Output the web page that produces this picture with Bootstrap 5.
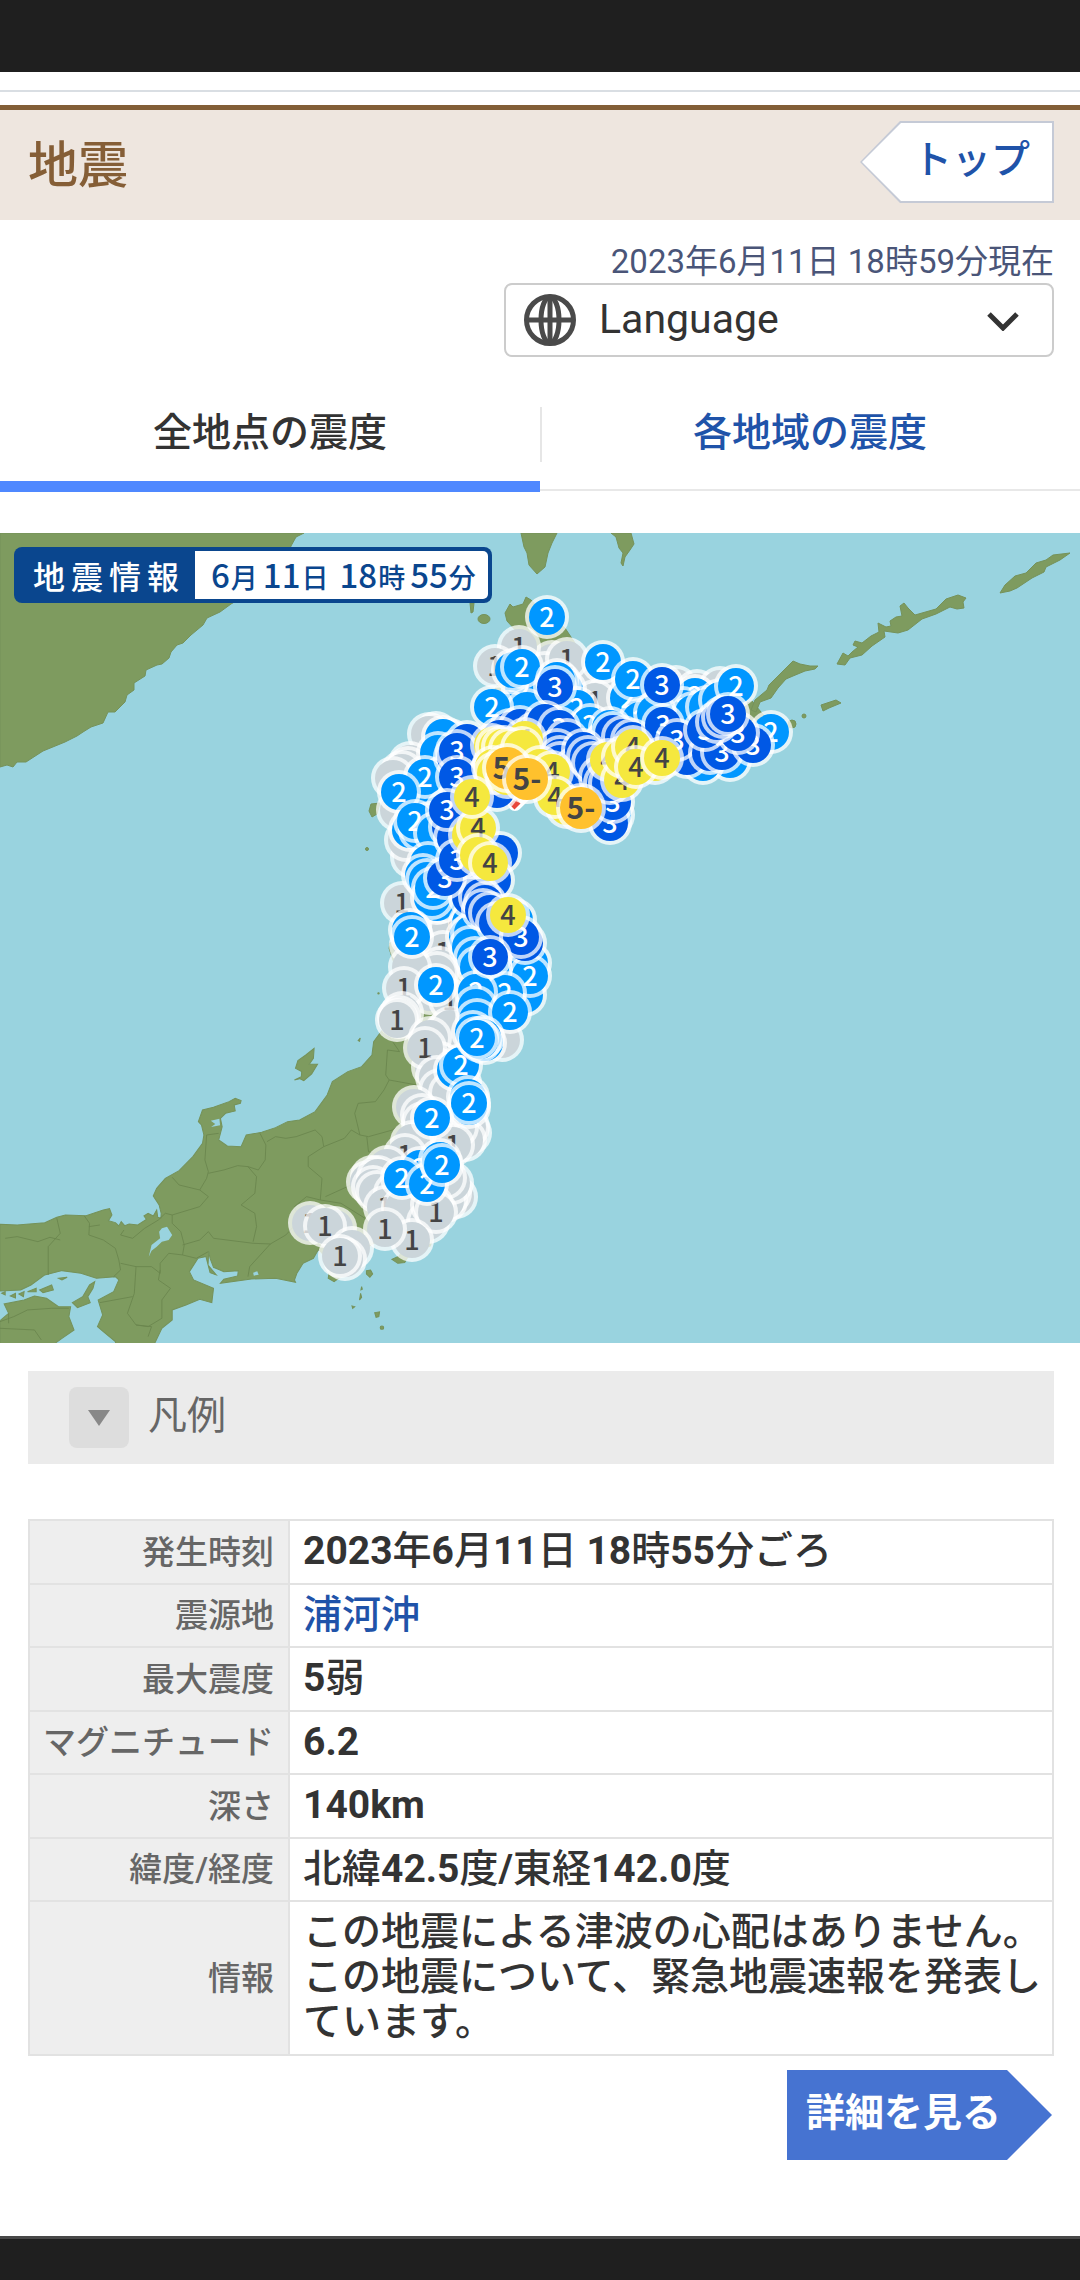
<!DOCTYPE html>
<html lang="ja">
<head>
<meta charset="utf-8">
<meta name="viewport" content="width=device-width, initial-scale=1">
<title>地震情報</title>
<link href="https://cdn.jsdelivr.net/npm/bootstrap@5.3.0/dist/css/bootstrap.min.css" rel="stylesheet">
<style>
  body { font-family: Roboto, "Noto Sans CJK JP", sans-serif; color: #333; background: #fff; font-size: 39px; line-height: 45px; }
  a { color: #1f53a9; text-decoration: none; }
  .gutter { padding-left: 28px; padding-right: 26px; }
  .status-strip { height: 72px; background: #1f1f1f; }
  .top-rule { height: 20px; border-bottom: 2px solid #d9dee3; margin-bottom: 13px; }
  .page-head { background: #eee6df; border-top: 5px solid #825e37; height: 115px; }
  .page-head h1 { font-size: 50px; line-height: 60px; font-weight: 500; color: #855e36; padding-top: 26px; }
  .back-link { position: relative; width: 194px; height: 82px; padding: 17px 24px 0 0; background: #c5cad6; clip-path: polygon(0 50%, 40px 0, 100% 0, 100% 100%, 40px 100%); font-weight: 500; text-align: right; margin-top: 11px; }
  .back-link::before { content: ""; position: absolute; inset: 2px; background: #fff; clip-path: polygon(0 50%, 39px 0, 100% 0, 100% 100%, 39px 100%); }
  .back-link span { position: relative; }
  .stamp { font-size: 33px; line-height: 43px; color: #4a5578; padding-top: 20px; }
  .lang-box { width: 550px; max-width: 100%; height: 74px; border: 2px solid #ccc; border-radius: 8px; padding: 0 33px 0 17px; }
  .lang-box select { border: 0; background: none; appearance: none; font-size: 41px; line-height: 50px; color: #333; padding: 0 0 2px 22px; }
  .tab-row { margin-top: 37px; }
  .tab-row a { height: 98px; padding-top: 17px; font-weight: 500; text-align: center; border-bottom: 11px solid #4f88ff; color: #333; }
  .tab-row a + a { position: relative; color: #1f53a9; border-bottom: 2px solid #e8e8e8; height: 97px; }
  .tab-row a + a::before { content: ""; position: absolute; left: 0; top: 13px; height: 55px; border-left: 2px solid #e6e6e6; }
  .quake-map { margin-top: 41px; background: #99d3df; }
  .map-title { position: absolute; left: 14px; top: 14px; height: 56px; background: #0a468e; border-radius: 8px; padding: 4px; color: #fff; font-family: "Noto Sans CJK JP", sans-serif; font-weight: 500; }
  .map-title b { font-size: 32px; font-weight: 500; letter-spacing: 6px; padding: 0 10px 0 15px; }
  .map-title time { font-size: 27px; background: #fff; color: #0a468e; border-radius: 0 5px 5px 0; padding: 0 12px 0 11px; height: 48px; line-height: 46px; }
  .map-title time i { font-style: normal; font-size: 33px; margin: 0 1px 0 5px; }
  .legend-bar { margin-top: 28px; height: 93px; width: 100%; border: 0; background: #ebebeb; color: #666; padding: 0 41px; text-align: left; }
  .legend-bar .arrow-box { width: 60px; height: 61px; border-radius: 8px; background: #ddd; }
  .legend-bar .legend-name { padding: 0 0 3px 19px; }
  .facts { margin-top: 55px; width: 100%; border-collapse: collapse; }
  .facts th, .facts td { border: 2px solid #e2e2e2; padding: 8px 14px 8px 12px; }
  .facts td { padding-right: 4px; padding-left: 13px; }
  .facts tr:nth-child(odd) td { padding-bottom: 9px; }
  .facts th { width: 260px; background: #eee; color: #666; font-size: 33px; font-weight: 500; text-align: right; vertical-align: middle; white-space: nowrap; }
  .facts td { font-weight: 500; }
  .facts td b { font-weight: 700; }
  .more-link { margin: 14px 2px 0 0; width: 265px; height: 90px; line-height: 86px; padding-left: 19px; background: #4673d1; color: #fff; font-weight: 700; clip-path: polygon(0 0, 220px 0, 100% 50%, 220px 100%, 0 100%); }
  .foot-strip { margin-top: 76px; height: 44px; background: #1f1f1f; border-top: 3px solid #484848; }
</style>
</head>
<body>
<div class="status-strip"></div>
<div class="top-rule"></div>
<header class="page-head gutter d-flex justify-content-between align-items-start">
  <h1 class="m-0">地震</h1>
  <a class="back-link d-block" href="#"><span>トップ</span></a>
</header>

<div class="gutter d-flex flex-column align-items-end">
  <div class="stamp">2023年6月11日 18時59分現在</div>
  <label class="lang-box d-flex align-items-center">
    <svg width="54" height="54" viewBox="0 0 54 54" fill="none" stroke="#4a4a4a" stroke-width="5" aria-hidden="true"><circle cx="27" cy="27" r="23.500"/><ellipse cx="27" cy="27" rx="9" ry="23"/><path d="M27 3v48M3 27h48"/></svg>
    <select class="flex-grow-1" aria-label="Language"><option>Language</option></select>
    <svg width="32" height="22" viewBox="0 0 32 22" fill="none" stroke="#333" stroke-width="5" aria-hidden="true"><path d="M2 5l14 14L30 5"/></svg>
  </label>
</div>

<nav class="tab-row d-flex">
  <a class="w-50" href="#" aria-current="page">全地点の震度</a>
  <a class="w-50" href="#">各地域の震度</a>
</nav>

<section class="quake-map position-relative">
  <svg id="map" class="d-block w-100 h-auto" viewBox="0 0 1080 810" role="img" aria-label="震度分布図">
    <rect width="1080" height="810" fill="#99d3df"/>
    <g fill="#7e9b5f" stroke="#75925a" stroke-width="1">
      <path d="M0 0H304L296 4 291 13 283 40 250 60 231 71 220 79 207 85 203 92 191 102 183 110 177 112 171 119 169 125 162 131 157 132 146 137 145 143 134 150 134 157 127 162 125 169 115 179 108 179 103 190 91 194 83 199 77 203 65 209 43 218 26 229 17 229 13 234 7 232 0 234Z"/>
      <path d="M521 0 524 14 527 20 529 32 537 41 545 34 548 20 552 10 557 0Z"/>
      <path d="M611 0 616 4 619 15 623 20 621 30 623 33 625 24 630 17 634 11 631 0Z"/>
      <path d="M505 80 510 71 513 74 523 71 526 64 531 67 545 80 565 95 575 110 600 145 625 165 680 185 715 185 735 175 752 168 770 190 750 205 700 225 660 235 620 250 605 285 590 265 560 250 540 245 500 235 480 255 485 275 440 300 415 300 400 280 400 250 430 220 430 195 460 205 490 195 510 180 495 155 520 130 518 100 507 88Z"/>
      <ellipse cx="484" cy="86" rx="6" ry="4.500"/><path d="M470 70h4l-1 9-2 1z"/>
      <path d="M371 271 380 270 377 281 372 284 369 278Z"/><circle cx="367" cy="316" r="1.500"/>
      <path d="M751 177 755 167 767 157 769 152 781 140 793 128 800 131 810 133 818 133 815 136 805 138 793 143 786 146 778 155 771 165 760 169 756 179Z"/>
      <path d="M837 131 843 120 848 123 852 119 858 114 853 112 855 108 862 110 871 103 879 99 878 90 886 94 891 93 890 88 896 84 902 83 900 73 904 70 908 75 915 82 936 76 946 66 958 62 966 65 963 69 964 75 957 76 950 74 936 81 922 86 908 97 898 100 884 98 885 104 872 113 862 122 850 125 845 132Z"/>
      <path d="M1000 60 1005 52 1015 43 1026 40 1036 30 1046 27 1053 22 1070 20 1060 27 1046 34 1044 39 1032 45 1017 55 1010 58Z"/>
      <path d="M821 172 836 167 841 170 829 175 823 178Z"/><circle cx="804" cy="183" r="2"/><circle cx="792" cy="191" r="4"/>
    </g>
    <g transform="translate(0 397) scale(.3444 .3333)">
      <g fill="#7e9b5f" stroke="#75925a" stroke-width="3">
        <path d="M0 883 50 885 130 878 165 862 190 855 250 857 300 840 318 836 325 855 315 872 335 878 345 888 352 875 362 887 375 882 400 885 425 868 418 858 430 850 445 858 455 840 458 862 467 865 468 850 462 825 445 798 455 775 480 745 520 722 560 680 588 640 592 615 585 585 576 575 588 540 620 532 665 515 683 505 700 512 698 520 680 525 683 543 655 550 640 565 645 590 640 610 635 630 660 648 700 650 715 615 760 607 800 593 835 575 870 570 915 545 950 495 965 455 1010 425 1050 410 1080 375 1085 335 1110 300 1130 250 1160 150 1130 55 1132 40 1190 0 1180-100 1234-200 1300-180 1394-230 1430-170 1450 0 1525 70 1525 160 1466 264 1400 340 1380 430 1370 580 1320 670 1310 730 1318 830 1342 845 1320 855 1290 880 1255 930 1250 948 1190 970 1175 998 1155 1000 1138 988 1160 978 1175 940 1150 900 1100 930 1070 950 1020 1000 990 1040 970 1055 953 1045 960 1000 925 958 910 985 880 1000 862 1030 855 1050 858 1057 800 1045 730 1047 640 1060 650 1048 690 1038 692 1022 650 1025 620 1012 610 985 606 965 604 1005 628 1035 610 1028 598 980 575 985 550 1025 562 1050 620 1075 615 1118 580 1108 540 1125 500 1140 500 1170 470 1195 440 1260H340L335 1235 300 1205 283 1190 298 1155 285 1110 330 1085 345 1050 335 1040 280 1045 235 1030 180 1022 130 1035 90 1065 60 1080 0 1083Z"/>
        <path d="M0 1172 25 1150 12 1122 70 1110 100 1098 135 1105 170 1130 205 1130 200 1160 215 1200 180 1225 160 1240 150 1260H0Z"/>
        <path d="M210 1118 240 1100 260 1065 275 1055 270 1075 255 1100 262 1118 225 1133ZM115 1080 150 1065 155 1080 125 1088ZM80 1085 105 1075 105 1085ZM55 1092 70 1085 68 1100ZM30 1098 45 1090 45 1104ZM170 1045 195 1042 180 1050ZM5 1090 15 1085 15 1095Z"/>
        <path d="M855 450 875 440 876 425 858 415 865 392 888 375 912 355 910 385 898 403 922 403 905 432 882 452 870 446Z"/>
        <path d="M1040 332l6-8-2 10zM1064 1022l12-2 6 12-8 10-10-10zM1050 1070l2 8-4 2zM1047 1090l3 12-6 8zM1022 1128l8 2-6 5zM1088 1148l14-2-2 14-8 2z"/>
        <circle cx="1109" cy="1193" r="5"/><circle cx="1099" cy="190" r="2"/>
      </g>
      <path fill="#99d3df" d="M432 980 440 945 465 925 462 905 470 895 485 890 500 915 490 930 470 935 455 950 440 962ZM612 572l25-6 2 20-26 5 12-9zM735 1028l12-4 4 10-14 3z"/>
      <g fill="none" stroke="#69854d" stroke-width="2.500" stroke-linejoin="round">
        <path d="M165 865 175 910 140 950 140 1035M15 925 50 920 110 935 145 922 175 930M245 858 260 880 258 915 300 930 335 955 345 990 350 1020 330 1040M258 890 290 885M360 900 350 915 385 925 420 895 460 870 480 850 500 855 500 880 525 905 535 945 530 975 570 985 605 965M350 1000 395 1010 440 1010 465 1030 465 1000 490 970 530 975M395 1010 390 1090 370 1150 395 1185 430 1190 470 1165 470 1110 495 1075 460 1050 465 1020M290 1118 385 1100M395 1185 440 1190 430 1220"/>
        <path d="M500 742 520 765 580 780 600 745 605 725 595 690 600 615 635 610M580 780 605 800 580 830 500 855M605 730 650 720 690 707 720 710 750 720 770 690 772 645 755 610M720 710 745 740 740 790 700 825 740 850 745 890 735 935M530 945 580 930 605 905 620 925 735 940 785 942 725 1010 720 1040M785 942 830 915 870 870 855 830 890 800 930 810 935 745 895 710 895 680 940 650 935 620 915 600 860 620 830 625 800 620 775 635M940 650 1000 625 1020 600 1045 615 1070 620 1140 600 1165 580M1045 615 1030 550 1040 520 1090 515 1115 480 1130 450 1120 435 1125 360 1160 365 1130 320 1110 305M1130 450 1210 465M1065 620 1070 665 1125 680M930 810 990 820 1060 865M945 800 1030 760M870 870 910 880"/>
        <path d="M0 1175 40 1160 80 1140 150 1135 200 1135M25 1150 25 1180M0 1195 100 1200 120 1230"/>
      </g>
    </g>
    <path d="M530 256 515 271" stroke="#fff" stroke-width="14" stroke-linecap="round"/>
    <path d="M518 268 512 274" stroke="#e8463a" stroke-width="7"/>
    <g id="stations" font-family="Noto Sans CJK JP, sans-serif" text-anchor="middle"></g>
  </svg>
  <div class="map-title d-flex align-items-center">
    <b>地震情報</b><time datetime="2023-06-11T18:55"><i>6</i>月<i>11</i>日 <i>18</i>時<i>55</i>分</time>
  </div>
</section>

<main class="gutter">
  <button type="button" class="legend-bar d-flex align-items-center" aria-expanded="false">
    <span class="arrow-box d-flex align-items-center justify-content-center"><svg width="22" height="16" viewBox="0 0 22 16" aria-hidden="true"><path d="M0 0h22L11 16z" fill="#888"/></svg></span>
    <span class="legend-name">凡例</span>
  </button>

  <table class="facts">
    <tr><th scope="row">発生時刻</th><td><b>2023</b>年<b>6</b>月<b>11</b>日 <b>18</b>時<b>55</b>分ごろ</td></tr>
    <tr><th scope="row">震源地</th><td><a href="#">浦河沖</a></td></tr>
    <tr><th scope="row">最大震度</th><td><b>5</b>弱</td></tr>
    <tr><th scope="row">マグニチュード</th><td><b>6.2</b></td></tr>
    <tr><th scope="row">深さ</th><td><b>140km</b></td></tr>
    <tr><th scope="row">緯度/経度</th><td>北緯<b>42.5</b>度<b>/</b>東経<b>142.0</b>度</td></tr>
    <tr><th scope="row">情報</th><td>この地震による津波の心配はありません。<br>この地震について、緊急地震速報を発表しています。</td></tr>
  </table>
  <div class="d-flex justify-content-end"><a class="more-link d-block" href="#">詳細を見る</a></div>
</main>
<footer class="foot-strip"></footer>

<script src="https://cdn.jsdelivr.net/npm/bootstrap@5.3.0/dist/js/bootstrap.bundle.min.js"></script>
<script>
// Stations by intensity, weakest first: "x,y" in map units; a trailing "-" hides the digit of a covered station.
const styles = {
  '1': ['#cbd5da', '#444', 18], '2': ['#0097ff', '#fff', 18], '3': ['#0058e5', '#fff', 18],
  '4': ['#f5e83e', '#444', 18], '5-': ['#ffc12d', '#444', 21]
};
const stations = {
  '1': `552,129- 545,140- 580,147- 519,114 495,133 567,126 607,163- 595,168 676,154- 697,158- 720,155- 436,200- 429,201-
    410,230- 408,235- 402,239- 393,245- 398,277- 412,324- 406,307- 402,370 411,412- 423,404- 450,394 443,419 440,435- 430,460- 450,467
    437,440- 410,434- 404,455 402,480- 399,484- 397,487 445,500- 450,495- 430,505- 502,507- 440,530- 433,534- 425,515 460,550- 437,544- 440,557- 450,560-
    414,574- 422,582- 423,590- 470,600- 468,594- 465,607- 457,594- 440,604- 418,610- 412,609- 453,612 405,622
    387,634- 372,644- 368,649- 378,644- 373,654- 377,659- 395,660- 415,660- 385,674 456,664- 450,660- 446,668- 452,650- 445,645- 407,680- 403,675- 428,689- 432,672- 436,679 412,707 385,696
    310,690 335,695- 325,693 352,715- 345,726- 340,723`,
  '2': `547,84 523,157 513,137- 522,134 510,179- 527,177- 492,174 565,157- 560,150- 557,147- 577,175 590,192 628,165 640,187 603,129 633,146
    695,163 683,175 693,180- 707,174- 720,167- 736,153 771,199 730,227- 703,230- 613,282- 655,180- 610,195-
    450,207- 443,204- 438,220- 443,244- 442,250- 423,267- 425,244 399,259 410,297- 420,297- 430,290- 415,288 435,300-
    428,330- 423,342- 427,347- 441,369- 437,370- 432,365- 433,355 410,397- 412,404 436,452
    470,390- 467,404- 472,400- 470,414- 475,425- 478,434- 495,440- 515,387- 530,430- 525,462- 530,443 505,460 476,459 476,474- 477,487- 510,479
    455,537- 461,532 485,510- 473,499- 483,504- 480,508- 477,505 468,564- 469,574- 469,570 432,585 420,635 402,645 427,651 440,627- 442,632`,
  '3': `510,197- 520,194- 500,205- 535,200- 555,154 545,189- 559,195 567,207- 557,217- 560,224- 560,230- 545,240- 575,235- 467,209- 455,224- 457,218 457,244 497,257-
    450,294- 455,305- 447,277 500,320- 465,345- 493,347- 472,356- 470,364- 480,364- 445,345 457,327 485,370- 483,377- 490,380- 497,390- 525,410- 521,404 490,424
    613,200- 623,204- 632,207- 583,217- 588,224- 593,230- 600,244- 605,250- 610,290 613,269 610,250- 662,152 663,192 687,224- 677,207
    710,220- 722,219 753,212 738,200 705,197 717,189- 723,184- 728,181`,
  '4': `525,206 492,212- 497,214- 503,214- 510,216- 522,215- 493,234- 495,240- 507,244- 540,234- 567,274- 552,239 555,264 470,302- 478,295 472,264
    478,322- 490,330 508,382 655,230- 608,227 622,247 623,224- 633,214 636,234 662,225`,
  '5-': `507,235 527,246 581,275`
};
const ns = 'http://www.w3.org/2000/svg';
const layer = document.getElementById('stations');
const add = (name, attrs) => {
  const el = document.createElementNS(ns, name);
  for (const k in attrs) el.setAttribute(k, attrs[k]);
  layer.appendChild(el);
  return el;
};
for (const level of ['1', '2', '3', '4', '5-']) {
  const [fill, ink, r] = styles[level];
  for (const item of stations[level].trim().split(/\s+/)) {
    const covered = item.endsWith('-');
    const [x, y] = item.replace(/-$/, '').split(',').map(Number);
    add('circle', { cx: x, cy: y, r: r + 4, fill: '#fff', 'fill-opacity': .75 });
    add('circle', { cx: x, cy: y, r, fill });
    if (!covered) {
      const big = level === '5-';
      add('text', { x, y: y + (big ? 11 : 10), fill: ink, 'font-size': big ? 30 : 27, 'font-weight': big ? 700 : 500 }).textContent = level;
    }
  }
}
</script>
</body>
</html>
